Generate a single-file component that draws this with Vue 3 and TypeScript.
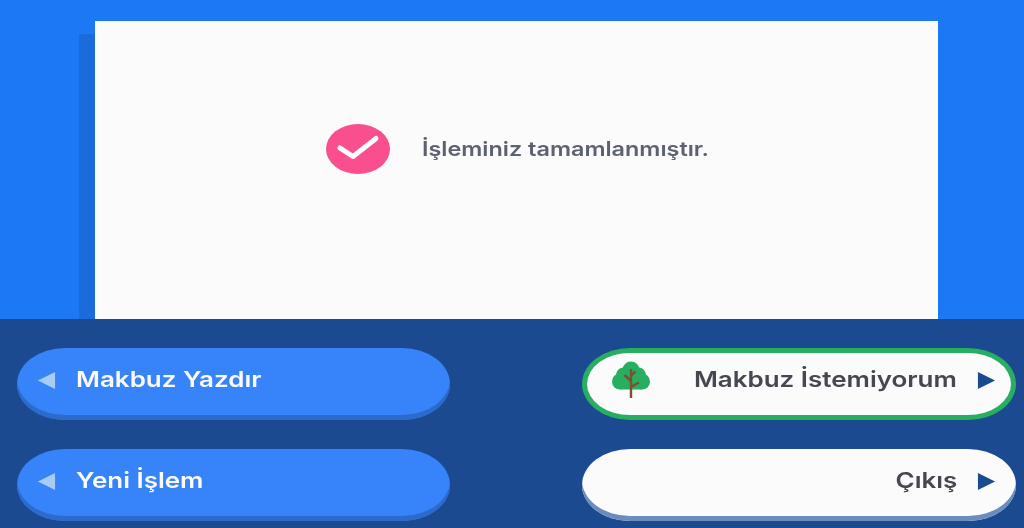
<template>
  <div class="screen">
    <section class="top">
      <div class="card">
        <div class="message">
          <svg class="check" viewBox="0 0 64 50" aria-hidden="true">
            <ellipse cx="32" cy="25" rx="32" ry="25" fill="#f94f8e" />
            <path d="M14 24 L27 32.5 L50 14.5" fill="none" stroke="#fff" stroke-width="5" stroke-linecap="round" stroke-linejoin="round" />
          </svg>
          <span class="message-text">İşleminiz tamamlanmıştır.</span>
        </div>
      </div>
    </section>
    <section class="actions">
      <button v-for="b in buttons" :key="b.label" class="btn" :class="[b.side, { eco: b.tree }]">
        <svg v-if="b.side === 'back'" class="arrow" viewBox="0 0 20 20" aria-hidden="true">
          <path d="M1 10 L19 1 V19 Z" fill="#a9cbf8" />
        </svg>
        <svg v-if="b.tree" class="tree" viewBox="0 0 38 38" aria-hidden="true">
          <g fill="#27ae60">
            <circle cx="19" cy="9" r="8.5" />
            <circle cx="11.5" cy="14" r="7.5" />
            <circle cx="26.5" cy="14" r="7.5" />
            <circle cx="8" cy="20.5" r="8" />
            <circle cx="30" cy="20.5" r="8" />
            <rect x="8" y="12" width="22" height="16.5" />
          </g>
          <path d="M19 37 V8 M19 20 L12.5 14 M19 26 L27 21.5 M19 14.5 L23.5 10.5" fill="none" stroke="#7d4f2c" stroke-width="2.4" />
        </svg>
        <span class="label">{{ b.label }}</span>
        <svg v-if="b.side === 'next'" class="arrow" viewBox="0 0 20 20" aria-hidden="true">
          <path d="M19 10 L1 1 V19 Z" fill="#1c4a90" />
        </svg>
      </button>
    </section>
  </div>
</template>

<script setup lang="ts">
interface ActionButton {
  label: string
  side: 'back' | 'next'
  tree?: boolean
}

const buttons: ActionButton[] = [
  { label: 'Makbuz Yazdır', side: 'back' },
  { label: 'Makbuz İstemiyorum', side: 'next', tree: true },
  { label: 'Yeni İşlem', side: 'back' },
  { label: 'Çıkış', side: 'next' }
]
</script>

<style>
html,
body {
  margin: 0;
  background: #1c4a90;
}
</style>

<style scoped>
.screen {
  width: 1024px;
  height: 528px;
  display: flex;
  flex-direction: column;
  overflow: hidden;
  font-family: "Inter", "Liberation Sans", sans-serif;
}

.top {
  height: 319px;
  box-sizing: border-box;
  padding: 21px 86px 0 95px;
  background: #1c78f5;
  overflow: hidden;
}

.card {
  height: 100%;
  background: #fbfbfb;
  box-shadow: -16px 13px 0 #1a6bdb;
  box-sizing: border-box;
  padding: 103px 0 0 231px;
}

.message {
  display: flex;
  align-items: center;
  gap: 32px;
  filter: blur(0.5px);
}

.check {
  width: 64px;
  height: 50px;
}

/* the source picture is stretched sideways, so the type is too */
.message-text {
  font-size: 20px;
  font-weight: 600;
  color: #5c6270;
  transform: scaleX(1.17);
  transform-origin: left center;
  margin-top: -1px;
}

.actions {
  flex: 1;
  background: #1c4a90;
  display: grid;
  grid-template-columns: 433px 434px;
  column-gap: 132px;
  row-gap: 29px;
  align-content: start;
  padding: 29px 0 0 17px;
}

.btn {
  height: 72px;
  box-sizing: border-box;
  border: 0;
  border-radius: 48px / 36px;
  display: flex;
  align-items: center;
  padding: 0 20px 5px;
  font: inherit;
  font-size: 22px;
  font-weight: 600;
  filter: blur(0.5px);
}

.btn.back {
  background: #3783fa;
  box-shadow: inset 0 -5px 0 #2c6bcc;
  color: #fbfbfb;
  gap: 20px;
}

.btn.next {
  background: #fbfbfb;
  box-shadow: inset 0 -5px 0 #6a8dbd;
  color: #454850;
  justify-content: flex-end;
  gap: 20px;
}

.btn.eco {
  border: 5px solid #27ae60;
  box-shadow: none;
  padding: 0 15px 5px 25px;
}

.tree {
  width: 38px;
  height: 38px;
  margin: -4px auto 0 0;
}

.arrow {
  width: 19px;
  height: 19px;
  flex: none;
  margin-top: -2px;
}

.label {
  white-space: nowrap;
  margin-top: -5px;
  transform: scaleX(1.18);
}

.btn.back .label {
  transform-origin: left center;
}

.btn.next .label {
  transform-origin: right center;
}
</style>
